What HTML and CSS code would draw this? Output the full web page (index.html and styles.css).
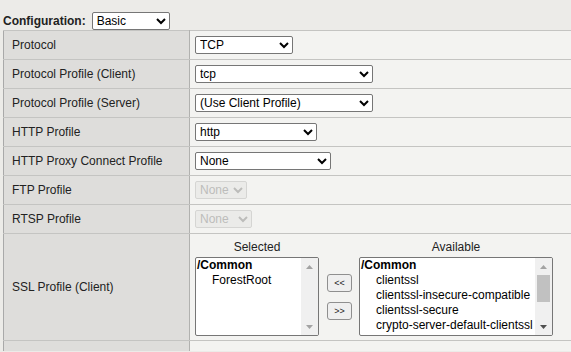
FILE: index.html
```html
<!DOCTYPE html>
<html lang="en">
<head>
    <meta charset="UTF-8">
    <title>Virtual Server Configuration</title>
    <link rel="stylesheet" href="styles.css">
</head>
<body>
    <div class="config-bar">
        <label class="config-label" for="config-mode">Configuration:</label>
        <select id="config-mode" class="sel sel-basic">
            <option>Basic</option>
            <option>Advanced</option>
        </select>
    </div>

    <table class="props">
        <tr>
            <td class="lbl">Protocol</td>
            <td class="val">
                <select class="sel sel-protocol"><option>TCP</option><option>UDP</option></select>
            </td>
        </tr>
        <tr>
            <td class="lbl">Protocol Profile (Client)</td>
            <td class="val">
                <select class="sel sel-wide"><option>tcp</option></select>
            </td>
        </tr>
        <tr>
            <td class="lbl">Protocol Profile (Server)</td>
            <td class="val">
                <select class="sel sel-wide"><option>(Use Client Profile)</option></select>
            </td>
        </tr>
        <tr>
            <td class="lbl">HTTP Profile</td>
            <td class="val">
                <select class="sel sel-http"><option>http</option></select>
            </td>
        </tr>
        <tr>
            <td class="lbl">HTTP Proxy Connect Profile</td>
            <td class="val">
                <select class="sel sel-proxy"><option>None</option></select>
            </td>
        </tr>
        <tr>
            <td class="lbl">FTP Profile</td>
            <td class="val">
                <select class="sel sel-ftp" disabled><option>None</option></select>
            </td>
        </tr>
        <tr>
            <td class="lbl">RTSP Profile</td>
            <td class="val">
                <select class="sel sel-rtsp" disabled><option>None</option></select>
            </td>
        </tr>
        <tr class="ssl-row">
            <td class="lbl">SSL Profile (Client)</td>
            <td class="val">
                <div class="chooser">
                    <div class="chooser-col col-selected">
                        <div class="chooser-head">Selected</div>
                        <div class="listbox">
                            <div class="list-items">
                                <div class="group">/Common</div>
                                <div class="item">ForestRoot</div>
                            </div>
                            <div class="scrollbar">
                                <div class="arrow">
                                    <svg width="7" height="4" viewBox="0 0 7 4"><polygon points="0,4 3.5,0 7,4" fill="#a3a3a3"/></svg>
                                </div>
                                <div class="track"></div>
                                <div class="arrow">
                                    <svg width="7" height="4" viewBox="0 0 7 4"><polygon points="0,0 7,0 3.5,4" fill="#a3a3a3"/></svg>
                                </div>
                            </div>
                        </div>
                    </div>

                    <div class="chooser-buttons">
                        <button class="move-btn">&lt;&lt;</button>
                        <button class="move-btn">&gt;&gt;</button>
                    </div>

                    <div class="chooser-col col-available">
                        <div class="chooser-head">Available</div>
                        <div class="listbox">
                            <div class="list-items">
                                <div class="group">/Common</div>
                                <div class="item">clientssl</div>
                                <div class="item">clientssl-insecure-compatible</div>
                                <div class="item">clientssl-secure</div>
                                <div class="item">crypto-server-default-clientssl</div>
                            </div>
                            <div class="scrollbar">
                                <div class="arrow">
                                    <svg width="7" height="4" viewBox="0 0 7 4"><polygon points="0,4 3.5,0 7,4" fill="#a3a3a3"/></svg>
                                </div>
                                <div class="track">
                                    <div class="thumb"></div>
                                </div>
                                <div class="arrow">
                                    <svg width="7" height="4" viewBox="0 0 7 4"><polygon points="0,0 7,0 3.5,4" fill="#505050"/></svg>
                                </div>
                            </div>
                        </div>
                    </div>
                </div>
            </td>
        </tr>
        <tr class="tail-row">
            <td class="lbl"></td>
            <td class="val"></td>
        </tr>
    </table>
</body>
</html>
```

FILE: styles.css
```css
* {
    margin: 0;
    padding: 0;
    box-sizing: border-box;
}

html, body {
    overflow: hidden;
}

body {
    font-family: "Liberation Sans", Arial, sans-serif;
    font-size: 12px;
    color: #222;
    background-color: #ecebe8;
    padding-left: 3px;
}

.config-bar {
    display: flex;
    align-items: flex-end;
    height: 30px;
    padding-top: 8px;
}

.config-label {
    font-weight: bold;
    line-height: 18px;
    margin-right: 6px;
}

.sel {
    font-family: "Liberation Sans", Arial, sans-serif;
    font-size: 12px;
    height: 18px;
    color: #000;
    background-color: #fff;
    border: 1px solid #767676;
    border-radius: 2px;
}

.sel:disabled {
    color: #a6a6a4;
    background-color: #e9e9e7;
    border-color: #c9c9c7;
}

.sel-basic { width: 78px; }
.sel-protocol { width: 98px; }
.sel-wide { width: 178px; }
.sel-http { width: 122px; }
.sel-proxy { width: 136px; }
.sel-ftp { width: 52px; }
.sel-rtsp { width: 57px; }

.props {
    border-collapse: collapse;
    width: 100%;
    border-left: 1px solid #a9a9a9;
    border-top: 1px solid #c4c4c2;
}

.props td {
    height: 29px;
    border-bottom: 1px solid #c4c4c2;
    vertical-align: middle;
}

.lbl {
    width: 186px;
    padding: 0 8px;
    background-color: #dedddb;
    border-right: 1px solid #b1b1af;
    white-space: nowrap;
}

.val {
    padding-left: 5px;
    background-color: #f3f3f1;
}

.props .ssl-row td {
    height: 107px;
}

.props .tail-row td {
    height: 10px;
    border-bottom: none;
}

.chooser {
    display: flex;
    padding-top: 6px;
    padding-bottom: 4px;
}

.chooser-head {
    text-align: center;
    line-height: 14px;
    margin-bottom: 3px;
}

.col-selected {
    width: 124px;
}

.col-available {
    width: 194px;
}

.chooser-buttons {
    width: 25px;
    margin: 17px 7px 0 8px;
    display: flex;
    flex-direction: column;
    justify-content: center;
    gap: 10px;
}

.move-btn {
    height: 18px;
    font-family: "Liberation Sans", Arial, sans-serif;
    font-size: 9px;
    color: #222;
    background-color: #efefef;
    border: 1px solid #8f8f8f;
    border-radius: 3px;
}

.listbox {
    display: flex;
    height: 79px;
    background-color: #fff;
    border: 1px solid #767676;
    border-radius: 2px;
    overflow: hidden;
}

.list-items {
    flex: 1;
    overflow: hidden;
    white-space: nowrap;
    color: #000;
}

.group {
    font-weight: bold;
    line-height: 15px;
    padding-left: 1px;
}

.item {
    line-height: 15px;
    padding-left: 16px;
}

.scrollbar {
    width: 17px;
    display: flex;
    flex-direction: column;
    background-color: #f0f0f0;
}

.arrow {
    height: 17px;
    display: flex;
    align-items: center;
    justify-content: center;
}

.track {
    flex: 1;
    padding: 0 2px;
}

.thumb {
    height: 27px;
    background-color: #c1c1c1;
}
```
